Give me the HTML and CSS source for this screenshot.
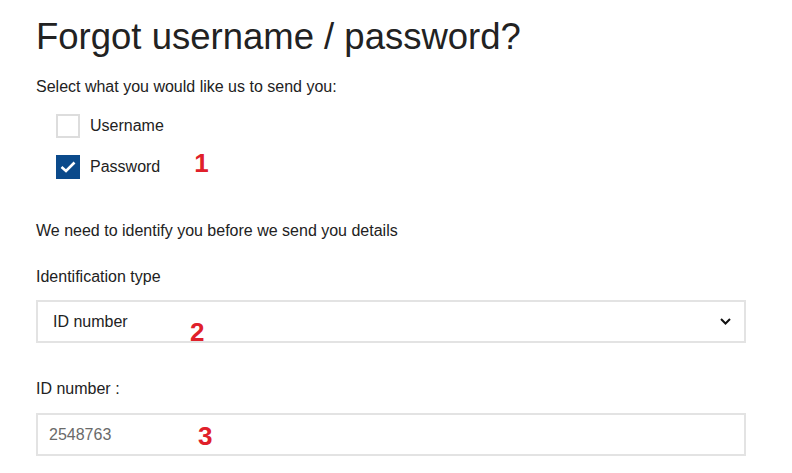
FILE: index.html
```html
<!DOCTYPE html>
<html>
<head>
<meta charset="utf-8">
<link rel="stylesheet" href="styles.css">
</head>
<body>
<div class="page">
  <h1 class="title">Forgot username / password?</h1>
  <p class="lead">Select what you would like us to send you:</p>
  <div class="options">
    <label class="option">
      <span class="box"></span>
      <span class="opt-text">Username</span>
    </label>
    <label class="option">
      <span class="box checked">
        <svg width="16" height="12" viewBox="0 0 16 12"><path d="M1.5 6 L6 10 L14.5 1.5" fill="none" stroke="#fff" stroke-width="2.6"/></svg>
      </span>
      <span class="opt-text">Password</span>
      <span class="marker m1">1</span>
    </label>
  </div>
  <p class="info">We need to identify you before we send you details</p>
  <p class="field-label">Identification type</p>
  <div class="select">
    <span class="select-text">ID number</span>
    <span class="marker m2">2</span>
    <svg class="chev" width="11" height="7" viewBox="0 0 11 7"><path d="M1 1 L5.5 5.5 L10 1" fill="none" stroke="#111" stroke-width="2"/></svg>
  </div>
  <p class="field-label second">ID number :</p>
  <div class="input">
    <span class="placeholder">2548763</span>
    <span class="marker m3">3</span>
  </div>
</div>
</body>
</html>
```

FILE: styles.css
```css
html, body {
  margin: 0;
  padding: 0;
  background: #fff;
}
body {
  font-family: "Liberation Sans", Arial, sans-serif;
  color: #222;
}
.page {
  padding: 15px 0 0 36px;
  width: 710px;
}
.title {
  margin: 0;
  font-weight: normal;
  font-size: 36.5px;
  line-height: 44px;
  color: #222;
}
.lead {
  margin: 18px 0 0;
  font-size: 16px;
  line-height: 20px;
}
.options {
  display: flex;
  flex-direction: column;
  gap: 17px;
  margin: 17px 0 0 20px;
}
.option {
  display: flex;
  align-items: center;
  height: 24px;
  font-size: 16px;
}
.box {
  width: 20px;
  height: 20px;
  border: 2px solid #ddd;
  background: #fff;
  display: flex;
  align-items: center;
  justify-content: center;
}
.box.checked {
  background: #0b4a8b;
  border-color: #0b4a8b;
}
.opt-text {
  margin-left: 10px;
}
.marker {
  color: #e0202a;
  font-weight: bold;
  font-size: 26px;
  line-height: 26px;
}
.m1 {
  margin-left: 34px;
  margin-top: -8px;
}
.info {
  margin: 42px 0 0;
  font-size: 16px;
  line-height: 20px;
}
.field-label {
  margin: 26px 0 0;
  font-size: 16px;
  line-height: 20px;
}
.field-label.second {
  margin-top: 36px;
}
.select {
  margin-top: 13px;
  height: 39px;
  border: 2px solid #e3e3e3;
  display: flex;
  align-items: center;
  padding: 0 13px 0 15px;
  font-size: 16px;
}
.select-text {
  width: 137px;
}
.m2 {
  margin-top: 20px;
}
.chev {
  margin-left: auto;
}
.input {
  margin-top: 14px;
  height: 39px;
  border: 2px solid #e3e3e3;
  display: flex;
  align-items: center;
  padding: 0 11px;
  font-size: 16px;
}
.placeholder {
  color: #6a6a6a;
  width: 149px;
}
.m3 {
  margin-top: 2px;
}
```
